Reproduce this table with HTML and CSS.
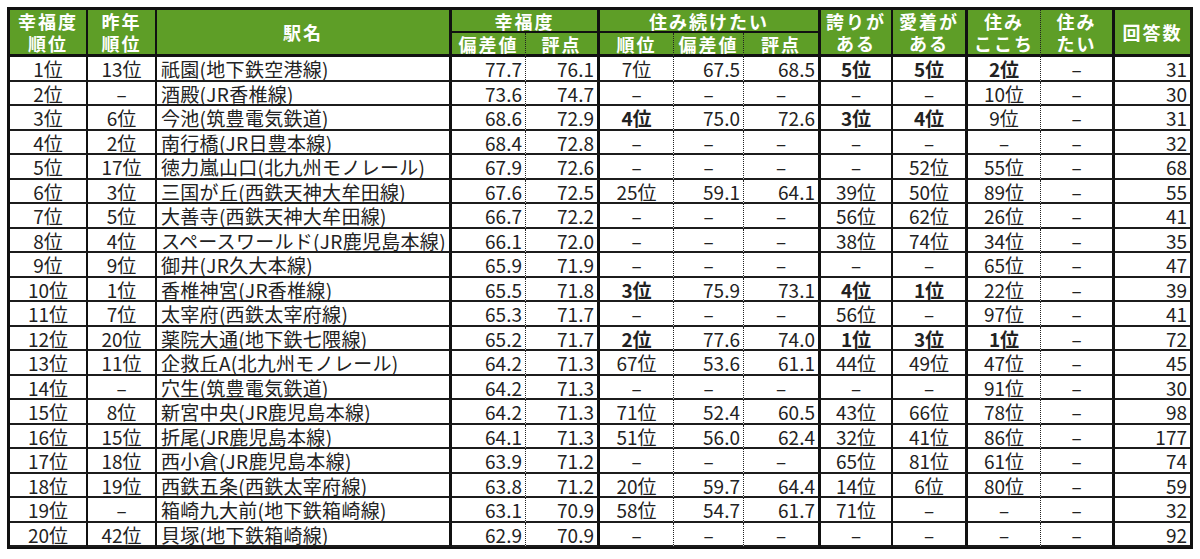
FILE: index.html
```html
<!DOCTYPE html>
<html lang="ja">
<head>
<meta charset="utf-8">
<title>幸福度ランキング</title>
<link rel="stylesheet" href="styles.css">
</head>
<body>
<div class="sheet">
  <div class="h c1 rs2">幸福度<br>順位</div>
  <div class="h c2 rs2">昨年<br>順位</div>
  <div class="h c3 rs2">駅名</div>
  <div class="h c5 cs2 top">幸福度</div>
  <div class="h c8 cs3 top">住み続けたい</div>
  <div class="h c9 rs2">誇りが<br>ある</div>
  <div class="h c10 rs2">愛着が<br>ある</div>
  <div class="h c11 rs2">住み<br>ここち</div>
  <div class="h c12 rs2">住み<br>たい</div>
  <div class="h c13 rs2">回答数</div>
  <div class="h c4 sub">偏差値</div>
  <div class="h c5 sub">評点</div>
  <div class="h c6 sub">順位</div>
  <div class="h c7 sub">偏差値</div>
  <div class="h c8 sub">評点</div>

  <div class="c c1">1位</div><div class="c c2">13位</div><div class="c c3">祇園(地下鉄空港線)</div><div class="c c4">77.7</div><div class="c c5">76.1</div><div class="c c6">7位</div><div class="c c7">67.5</div><div class="c c8">68.5</div><div class="c c9 b">5位</div><div class="c c10 b">5位</div><div class="c c11 b">2位</div><div class="c c12">–</div><div class="c c13">31</div>
  <div class="c c1">2位</div><div class="c c2">–</div><div class="c c3">酒殿(JR香椎線)</div><div class="c c4">73.6</div><div class="c c5">74.7</div><div class="c c6">–</div><div class="c c7 d">–</div><div class="c c8 d">–</div><div class="c c9">–</div><div class="c c10">–</div><div class="c c11">10位</div><div class="c c12">–</div><div class="c c13">30</div>
  <div class="c c1">3位</div><div class="c c2">6位</div><div class="c c3">今池(筑豊電気鉄道)</div><div class="c c4">68.6</div><div class="c c5">72.9</div><div class="c c6 b">4位</div><div class="c c7">75.0</div><div class="c c8">72.6</div><div class="c c9 b">3位</div><div class="c c10 b">4位</div><div class="c c11">9位</div><div class="c c12">–</div><div class="c c13">31</div>
  <div class="c c1">4位</div><div class="c c2">2位</div><div class="c c3">南行橋(JR日豊本線)</div><div class="c c4">68.4</div><div class="c c5">72.8</div><div class="c c6">–</div><div class="c c7 d">–</div><div class="c c8 d">–</div><div class="c c9">–</div><div class="c c10">–</div><div class="c c11">–</div><div class="c c12">–</div><div class="c c13">32</div>
  <div class="c c1">5位</div><div class="c c2">17位</div><div class="c c3">徳力嵐山口(北九州モノレール)</div><div class="c c4">67.9</div><div class="c c5">72.6</div><div class="c c6">–</div><div class="c c7 d">–</div><div class="c c8 d">–</div><div class="c c9">–</div><div class="c c10">52位</div><div class="c c11">55位</div><div class="c c12">–</div><div class="c c13">68</div>
  <div class="c c1">6位</div><div class="c c2">3位</div><div class="c c3">三国が丘(西鉄天神大牟田線)</div><div class="c c4">67.6</div><div class="c c5">72.5</div><div class="c c6">25位</div><div class="c c7">59.1</div><div class="c c8">64.1</div><div class="c c9">39位</div><div class="c c10">50位</div><div class="c c11">89位</div><div class="c c12">–</div><div class="c c13">55</div>
  <div class="c c1">7位</div><div class="c c2">5位</div><div class="c c3">大善寺(西鉄天神大牟田線)</div><div class="c c4">66.7</div><div class="c c5">72.2</div><div class="c c6">–</div><div class="c c7 d">–</div><div class="c c8 d">–</div><div class="c c9">56位</div><div class="c c10">62位</div><div class="c c11">26位</div><div class="c c12">–</div><div class="c c13">41</div>
  <div class="c c1">8位</div><div class="c c2">4位</div><div class="c c3">スペースワールド(JR鹿児島本線)</div><div class="c c4">66.1</div><div class="c c5">72.0</div><div class="c c6">–</div><div class="c c7 d">–</div><div class="c c8 d">–</div><div class="c c9">38位</div><div class="c c10">74位</div><div class="c c11">34位</div><div class="c c12">–</div><div class="c c13">35</div>
  <div class="c c1">9位</div><div class="c c2">9位</div><div class="c c3">御井(JR久大本線)</div><div class="c c4">65.9</div><div class="c c5">71.9</div><div class="c c6">–</div><div class="c c7 d">–</div><div class="c c8 d">–</div><div class="c c9">–</div><div class="c c10">–</div><div class="c c11">65位</div><div class="c c12">–</div><div class="c c13">47</div>
  <div class="c c1">10位</div><div class="c c2">1位</div><div class="c c3">香椎神宮(JR香椎線)</div><div class="c c4">65.5</div><div class="c c5">71.8</div><div class="c c6 b">3位</div><div class="c c7">75.9</div><div class="c c8">73.1</div><div class="c c9 b">4位</div><div class="c c10 b">1位</div><div class="c c11">22位</div><div class="c c12">–</div><div class="c c13">39</div>
  <div class="c c1">11位</div><div class="c c2">7位</div><div class="c c3">太宰府(西鉄太宰府線)</div><div class="c c4">65.3</div><div class="c c5">71.7</div><div class="c c6">–</div><div class="c c7 d">–</div><div class="c c8 d">–</div><div class="c c9">56位</div><div class="c c10">–</div><div class="c c11">97位</div><div class="c c12">–</div><div class="c c13">41</div>
  <div class="c c1">12位</div><div class="c c2">20位</div><div class="c c3">薬院大通(地下鉄七隈線)</div><div class="c c4">65.2</div><div class="c c5">71.7</div><div class="c c6 b">2位</div><div class="c c7">77.6</div><div class="c c8">74.0</div><div class="c c9 b">1位</div><div class="c c10 b">3位</div><div class="c c11 b">1位</div><div class="c c12">–</div><div class="c c13">72</div>
  <div class="c c1">13位</div><div class="c c2">11位</div><div class="c c3">企救丘A(北九州モノレール)</div><div class="c c4">64.2</div><div class="c c5">71.3</div><div class="c c6">67位</div><div class="c c7">53.6</div><div class="c c8">61.1</div><div class="c c9">44位</div><div class="c c10">49位</div><div class="c c11">47位</div><div class="c c12">–</div><div class="c c13">45</div>
  <div class="c c1">14位</div><div class="c c2">–</div><div class="c c3">穴生(筑豊電気鉄道)</div><div class="c c4">64.2</div><div class="c c5">71.3</div><div class="c c6">–</div><div class="c c7 d">–</div><div class="c c8 d">–</div><div class="c c9">–</div><div class="c c10">–</div><div class="c c11">91位</div><div class="c c12">–</div><div class="c c13">30</div>
  <div class="c c1">15位</div><div class="c c2">8位</div><div class="c c3">新宮中央(JR鹿児島本線)</div><div class="c c4">64.2</div><div class="c c5">71.3</div><div class="c c6">71位</div><div class="c c7">52.4</div><div class="c c8">60.5</div><div class="c c9">43位</div><div class="c c10">66位</div><div class="c c11">78位</div><div class="c c12">–</div><div class="c c13">98</div>
  <div class="c c1">16位</div><div class="c c2">15位</div><div class="c c3">折尾(JR鹿児島本線)</div><div class="c c4">64.1</div><div class="c c5">71.3</div><div class="c c6">51位</div><div class="c c7">56.0</div><div class="c c8">62.4</div><div class="c c9">32位</div><div class="c c10">41位</div><div class="c c11">86位</div><div class="c c12">–</div><div class="c c13">177</div>
  <div class="c c1">17位</div><div class="c c2">18位</div><div class="c c3">西小倉(JR鹿児島本線)</div><div class="c c4">63.9</div><div class="c c5">71.2</div><div class="c c6">–</div><div class="c c7 d">–</div><div class="c c8 d">–</div><div class="c c9">65位</div><div class="c c10">81位</div><div class="c c11">61位</div><div class="c c12">–</div><div class="c c13">74</div>
  <div class="c c1">18位</div><div class="c c2">19位</div><div class="c c3">西鉄五条(西鉄太宰府線)</div><div class="c c4">63.8</div><div class="c c5">71.2</div><div class="c c6">20位</div><div class="c c7">59.7</div><div class="c c8">64.4</div><div class="c c9">14位</div><div class="c c10">6位</div><div class="c c11">80位</div><div class="c c12">–</div><div class="c c13">59</div>
  <div class="c c1">19位</div><div class="c c2">–</div><div class="c c3">箱崎九大前(地下鉄箱崎線)</div><div class="c c4">63.1</div><div class="c c5">70.9</div><div class="c c6">58位</div><div class="c c7">54.7</div><div class="c c8">61.7</div><div class="c c9">71位</div><div class="c c10">–</div><div class="c c11">–</div><div class="c c12">–</div><div class="c c13">32</div>
  <div class="c c1">20位</div><div class="c c2">42位</div><div class="c c3">貝塚(地下鉄箱崎線)</div><div class="c c4">62.9</div><div class="c c5">70.9</div><div class="c c6">–</div><div class="c c7 d">–</div><div class="c c8 d">–</div><div class="c c9">–</div><div class="c c10">–</div><div class="c c11">–</div><div class="c c12">–</div><div class="c c13">92</div>
</div>
</body>
</html>
```

FILE: styles.css
```css
html, body {
  margin: 0;
  padding: 0;
  background: #ffffff;
}

body {
  font-family: "Noto Sans CJK JP", "Noto Sans", sans-serif;
}

.sheet {
  display: grid;
  grid-template-columns: 78px 69px 295px 74px 74px 74px 70px 77px 72px 75px 73px 74px 75px;
  grid-template-rows: 23px 24px repeat(20, 24.5px);
  width: max-content;
  margin: 7px 0 0 7px;
  border: 3px solid #111;
  border-bottom-width: 2px;
}

.sheet > div {
  box-sizing: border-box;
  white-space: nowrap;
}

/* header cells */
.h {
  background: #5e9e27;
  color: #ffffff;
  font-weight: bold;
  font-size: 18px;
  line-height: 22px;
  letter-spacing: 2px;
  display: flex;
  align-items: center;
  justify-content: center;
  text-align: center;
  border-bottom: 3px solid #111;
}

.h.top {
  border-bottom: 2px solid #111;
}

.rs2 { grid-row: span 2; }
.cs2 { grid-column: span 2; }
.cs3 { grid-column: span 3; }

/* data cells */
.c {
  font-size: 19px;
  line-height: 23px;
  color: #222;
  border-bottom: 2px solid #1c1c1c;
  text-align: center;
}

.c.b { font-weight: bold; }

.c.c3 { text-align: left; padding-left: 4px; letter-spacing: 0.3px; }
.c.c4, .c.c5, .c.c7, .c.c8 { text-align: right; padding-right: 3px; }
.c.c13 { text-align: right; padding-right: 3px; }
.c.d { text-align: center; padding-right: 0; }

/* column right borders */
.c1 { border-right: 2px solid #111; }
.c2 { border-right: 2px solid #111; }
.c3 { border-right: 3px solid #111; }
.c4 { border-right: 1px dotted #222; }
.c5 { border-right: 3px solid #111; }
.c6 { border-right: 1px dotted #222; }
.c7 { border-right: 1px dotted #222; }
.c8 { border-right: 3px solid #111; }
.c9 { border-right: 2px solid #111; }
.c10 { border-right: 3px solid #111; }
.c11 { border-right: 1px dotted #222; }
.c12 { border-right: 3px solid #111; }
.c13 { border-right: none; }
```
